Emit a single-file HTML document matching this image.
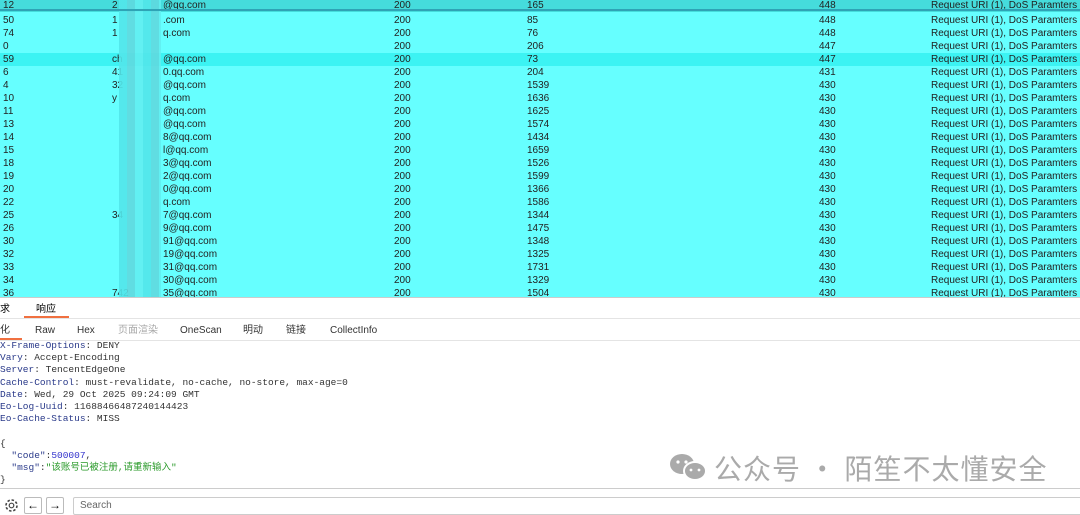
<!DOCTYPE html><html><head><meta charset="utf-8"><style>
body{margin:0;width:1080px;height:515px;overflow:hidden;background:#fff;font-family:"Liberation Sans","Noto Sans CJK SC",sans-serif;position:relative}
.r{position:absolute;left:0;width:1080px;height:13px;background:#66ffff;font-size:10px;line-height:13px;color:#222}
.r span{position:absolute;white-space:nowrap}
.blur{position:absolute;left:119px;top:0;width:42px;height:297px;background:repeating-linear-gradient(90deg,#52e6ea 0 8px,#5fd9df 8px 16px,#62eef0 16px 24px);opacity:.9}
.mono{font-family:"Liberation Mono","Noto Sans CJK SC",monospace;font-size:9.5px;position:absolute;left:0;line-height:12.2px;color:#333;white-space:pre}
.k{color:#2a3a8a}
.tb span{position:absolute;top:0;height:14px;line-height:14px}
</style></head><body>
<div id="t" style="position:absolute;left:0;top:0;width:1080px;height:297px;overflow:hidden;background:#66ffff"></div>
<div class="blur"></div>
<div style="position:absolute;left:0;top:9px;width:1080px;height:2px;background:#2fa3b5"></div>
<div style="position:absolute;left:0;top:297px;width:1080px;height:1px;background:#ccc"></div>
<div style="position:absolute;top:303px;left:0;font-size:10px;line-height:14px">求</div>
<div style="position:absolute;top:303px;left:36px;font-size:10px;line-height:14px">响应</div>
<div style="position:absolute;top:316px;left:24px;width:45px;height:2px;background:#f07040"></div>
<div style="position:absolute;top:318px;left:0;width:1080px;height:1px;background:#e4e4e4"></div>
<div class="tb" style="position:absolute;top:324px;left:0;font-size:10px;color:#333;white-space:nowrap"><span style="left:0">化</span><span style="left:35px">Raw</span><span style="left:77px">Hex</span><span style="left:118px;color:#aaa">页面渲染</span><span style="left:180px">OneScan</span><span style="left:243px">明动</span><span style="left:286px">链接</span><span style="left:330px">CollectInfo</span></div>
<div style="position:absolute;top:338px;left:0;width:22px;height:2px;background:#f07040"></div>
<div style="position:absolute;top:340px;left:0;width:1080px;height:1px;background:#e4e4e4"></div>
<div class="mono" style="top:340px"><span class="k">X-Frame-Options</span>: DENY
<span class="k">Vary</span>: Accept-Encoding
<span class="k">Server</span>: TencentEdgeOne
<span class="k">Cache-Control</span>: must-revalidate, no-cache, no-store, max-age=0
<span class="k">Date</span>: Wed, 29 Oct 2025 09:24:09 GMT
<span class="k">Eo-Log-Uuid</span>: 11688466487240144423
<span class="k">Eo-Cache-Status</span>: MISS

{
  <span class="k">"code"</span>:<span style="color:#33c">500007</span>,
  <span class="k">"msg"</span>:<span style="color:#2a9a2a">"该账号已被注册,请重新输入"</span>
}</div>
<div style="position:absolute;left:668px;top:452px;width:44px;height:30px">
<svg width="44" height="30" viewBox="0 0 44 30"><ellipse cx="14" cy="12" rx="12" ry="10" fill="#aaa"/><ellipse cx="27" cy="19" rx="11" ry="9" fill="#aaa" stroke="#fff" stroke-width="2"/><circle cx="10" cy="10" r="1.6" fill="#fff"/><circle cx="18" cy="10" r="1.6" fill="#fff"/><circle cx="23" cy="18" r="1.4" fill="#fff"/><circle cx="31" cy="18" r="1.4" fill="#fff"/></svg></div>
<div style="position:absolute;left:714px;top:451px;font-size:28px;color:#aaa;letter-spacing:1px;line-height:34px;font-family:'Noto Sans CJK SC',sans-serif">公众号 · 陌笙不太懂安全</div>
<div style="position:absolute;top:488px;left:0;width:1080px;height:1px;background:#ccc"></div>
<svg style="position:absolute;left:3px;top:497px" width="17" height="17" viewBox="0 0 17 17"><circle cx="8.5" cy="8.5" r="5.5" fill="none" stroke="#444" stroke-width="1.6" stroke-dasharray="2.5 1.8"/><circle cx="8.5" cy="8.5" r="2.3" fill="none" stroke="#444" stroke-width="1.2"/></svg>
<div style="position:absolute;left:24px;top:497px;width:16px;height:15px;border:1px solid #bbb;border-radius:2px;font-size:12px;line-height:15px;text-align:center">←</div>
<div style="position:absolute;left:46px;top:497px;width:16px;height:15px;border:1px solid #bbb;border-radius:2px;font-size:12px;line-height:15px;text-align:center">→</div>
<div style="position:absolute;left:73px;top:497px;width:1010px;height:16px;border:1px solid #ccc;border-radius:2px;font-size:10px;line-height:16px;color:#666;padding-left:6px">Search</div>
<script>
var d=[["12","2","@qq.com","165","448"],["50","1",".com","85","448"],["74","1","q.com","76","448"],["0","","","206","447"],["59","ch","@qq.com","73","447"],["6","41","0.qq.com","204","431"],["4","32","@qq.com","1539","430"],["10","y","q.com","1636","430"],["11","","@qq.com","1625","430"],["13","","@qq.com","1574","430"],["14","","8@qq.com","1434","430"],["15","","l@qq.com","1659","430"],["18","","3@qq.com","1526","430"],["19","","2@qq.com","1599","430"],["20","","0@qq.com","1366","430"],["22","","q.com","1586","430"],["25","34","7@qq.com","1344","430"],["26","","9@qq.com","1475","430"],["30","","91@qq.com","1348","430"],["32","","19@qq.com","1325","430"],["33","","31@qq.com","1731","430"],["34","","30@qq.com","1329","430"],["36","742","35@qq.com","1504","430"]];
var h="";d.forEach(function(r,i){var bg=i==0?"#45dcdc":(i==4?"#3cf3f3":"#66ffff");var y=i==0?-1:i*13+1;
h+='<div class="r" style="top:'+y+'px;background:'+bg+'"><span style="left:3px">'+r[0]+'</span><span style="left:112px">'+r[1]+'</span><span style="left:163px">'+r[2]+'</span><span style="left:394px">200</span><span style="left:527px">'+r[3]+'</span><span style="left:819px">'+r[4]+'</span><span style="left:931px">Request URI (1), DoS Paramters (1</span></div>';});
document.getElementById("t").innerHTML=h;
</script>
</body></html>
